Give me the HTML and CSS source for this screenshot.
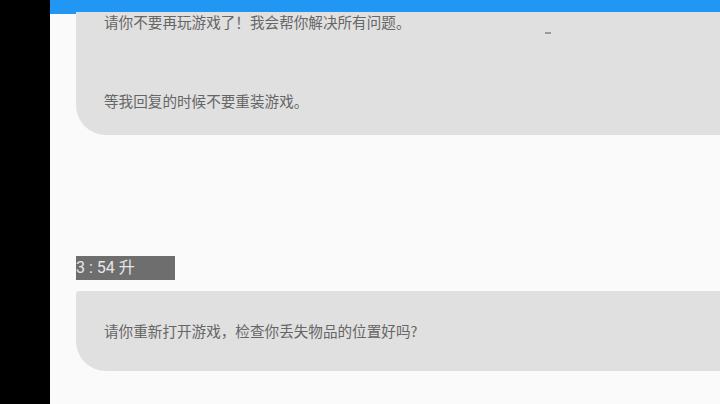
FILE: index.html
```html
<!DOCTYPE html>
<html lang="zh">
<head>
<meta charset="utf-8">
<link rel="stylesheet" href="styles.css">
</head>
<body>
<div class="screen">
  <div class="side"></div>
  <div class="main">
    <div class="topbar"></div>
    <div class="content">
      <div class="bubble first">
        <p class="msg">请你不要再玩游戏了！我会帮你解决所有问题。</p>
        <p class="msg gap">等我回复的时候不要重装游戏。</p>
        <span class="dash"></span>
      </div>
      <div class="stamp">3 : 54 升</div>
      <div class="bubble second">
        <p class="msg">请你重新打开游戏，检查你丢失物品的位置好吗?</p>
      </div>
    </div>
  </div>
</div>
</body>
</html>
```
FILE: styles.css
```css
html, body {
  margin: 0;
  padding: 0;
  width: 720px;
  height: 404px;
  overflow: hidden;
  background: #fafafa;
  font-family: "Noto Sans CJK SC", "Noto Sans", sans-serif;
}
.screen {
  display: flex;
  width: 720px;
  height: 404px;
}
.side {
  width: 50px;
  flex: none;
  background: #000;
}
.main {
  flex: 1;
  position: relative;
  display: flex;
  flex-direction: column;
  background: #fafafa;
}
.topbar {
  height: 12px;
  background: #2196f3;
  position: relative;
}
.topbar::after {
  content: "";
  position: absolute;
  left: 0;
  top: 0;
  width: 51px;
  height: 14px;
  background: #2196f3;
}
.content {
  padding-left: 26px;
  display: flex;
  flex-direction: column;
  align-items: flex-start;
}
.bubble {
  align-self: stretch;
  background: #e0e0e0;
  padding-left: 28px;
  position: relative;
}
.first {
  height: 123px;
  box-sizing: border-box;
  padding-top: 0;
  border-bottom-left-radius: 30px;
}
.second {
  margin-top: 11px;
  height: 80px;
  box-sizing: border-box;
  padding-top: 30px;
  border-top-left-radius: 3px;
  border-bottom-left-radius: 30px;
}
.msg {
  margin: 0;
  font-size: 14.6px;
  line-height: 20px;
  color: #666666;
}
.gap {
  margin-top: 59px;
}
.dash {
  position: absolute;
  left: 469px;
  top: 20px;
  width: 6px;
  height: 2px;
  background: #9a9a9a;
}
.stamp {
  margin-top: 121px;
  width: 99px;
  height: 24px;
  line-height: 24px;
  background: #6e6e6e;
  color: #e6e6e6;
  font-family: Roboto, "Noto Sans CJK SC", sans-serif;
  font-size: 16px;
  white-space: nowrap;
}
```
